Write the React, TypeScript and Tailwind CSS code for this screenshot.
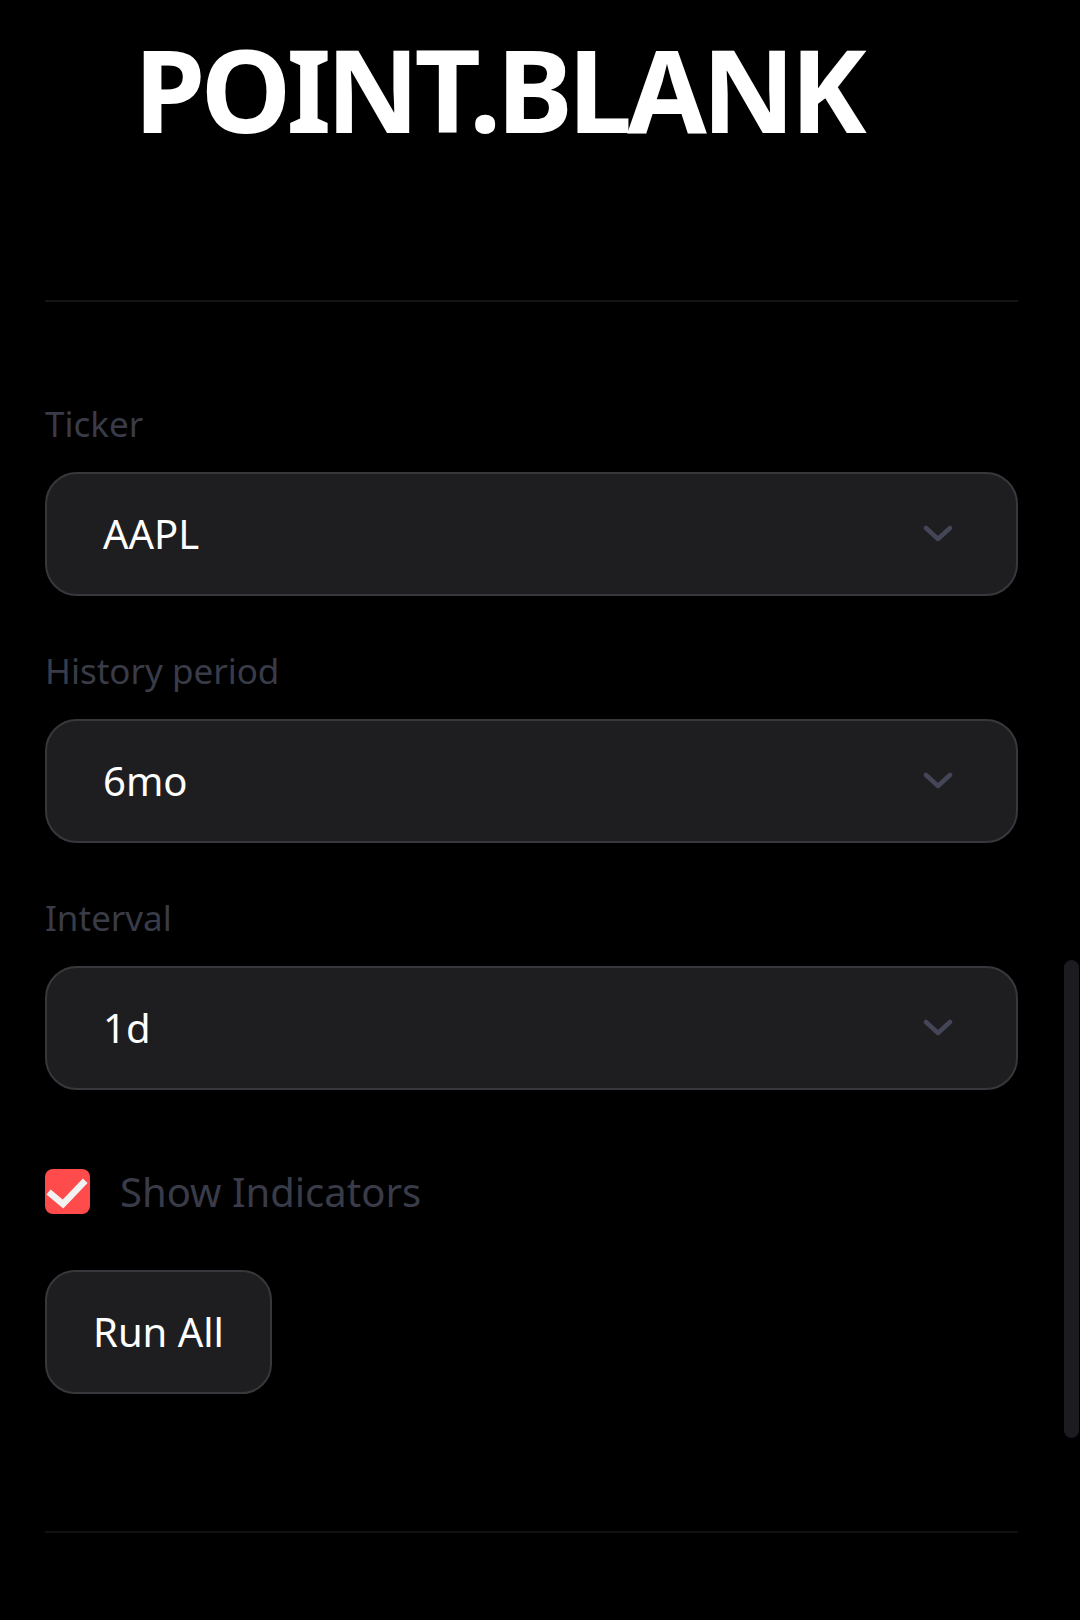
import React from 'react';

const FIELDS = [
  { label: 'Ticker', value: 'AAPL' },
  { label: 'History period', value: '6mo' },
  { label: 'Interval', value: '1d' },
];

const Chevron = () => (
  <svg width="30" height="18" viewBox="0 0 30 18" fill="none">
    <polyline
      points="3,3 15,14 27,3"
      stroke="#444657"
      strokeWidth="4.5"
      strokeLinecap="round"
      strokeLinejoin="round"
    />
  </svg>
);

const SelectBox = ({ label, value }: { label: string; value: string }) => (
  <div className="flex flex-col">
    <label className="text-[35px] leading-[48px] text-[#393c48]">{label}</label>
    <div className="mt-[24px] h-[124px] rounded-[32px] border-2 border-[#38383c] bg-[#1e1e21] pl-[56px] pr-[63px] flex items-center justify-between">
      <span className="text-[40px] leading-none text-white">{value}</span>
      <Chevron />
    </div>
  </div>
);

export default function App() {
  return (
    <div className="relative min-h-[1620px] w-full bg-black font-['Noto_Sans',sans-serif] overflow-hidden">
      <h1 className="pl-[134px] pt-[31px] text-[115px] leading-none font-bold tracking-[-5px] text-white">
        POINT.BLANK
      </h1>

      <div className="pl-[45px] pr-[62px]">
        <div className="mt-[154px] h-[2px] bg-[#141414]" />

        <div className="mt-[98px] flex flex-col gap-[51px]">
          {FIELDS.map(({ label, value }) => (
            <SelectBox key={label} label={label} value={value} />
          ))}
        </div>

        <div className="mt-[79px] flex items-center gap-[30px]">
          <div className="w-[45px] h-[45px] rounded-[8px] bg-[#ff4b4b] flex items-center justify-center">
            <svg width="45" height="45" viewBox="0 0 45 45" fill="none">
              <polyline
                points="6,25 18,35 38,14"
                stroke="#f2f2f2"
                strokeWidth="6.5"
                strokeLinecap="square"
              />
            </svg>
          </div>
          <span className="text-[40px] leading-none text-[#393c48]">Show Indicators</span>
        </div>

        <button className="mt-[56px] h-[124px] px-[46px] rounded-[30px] border-2 border-[#38383c] bg-[#1e1e21] text-[40px] leading-none text-white">
          Run All
        </button>

        <div className="mt-[137px] h-[2px] bg-[#111111]" />
      </div>

      {/* scrollbar thumb */}
      <div className="absolute left-[1064px] top-[960px] w-[15px] h-[478px] rounded-full bg-[#1c1c20]" />
    </div>
  );
}
